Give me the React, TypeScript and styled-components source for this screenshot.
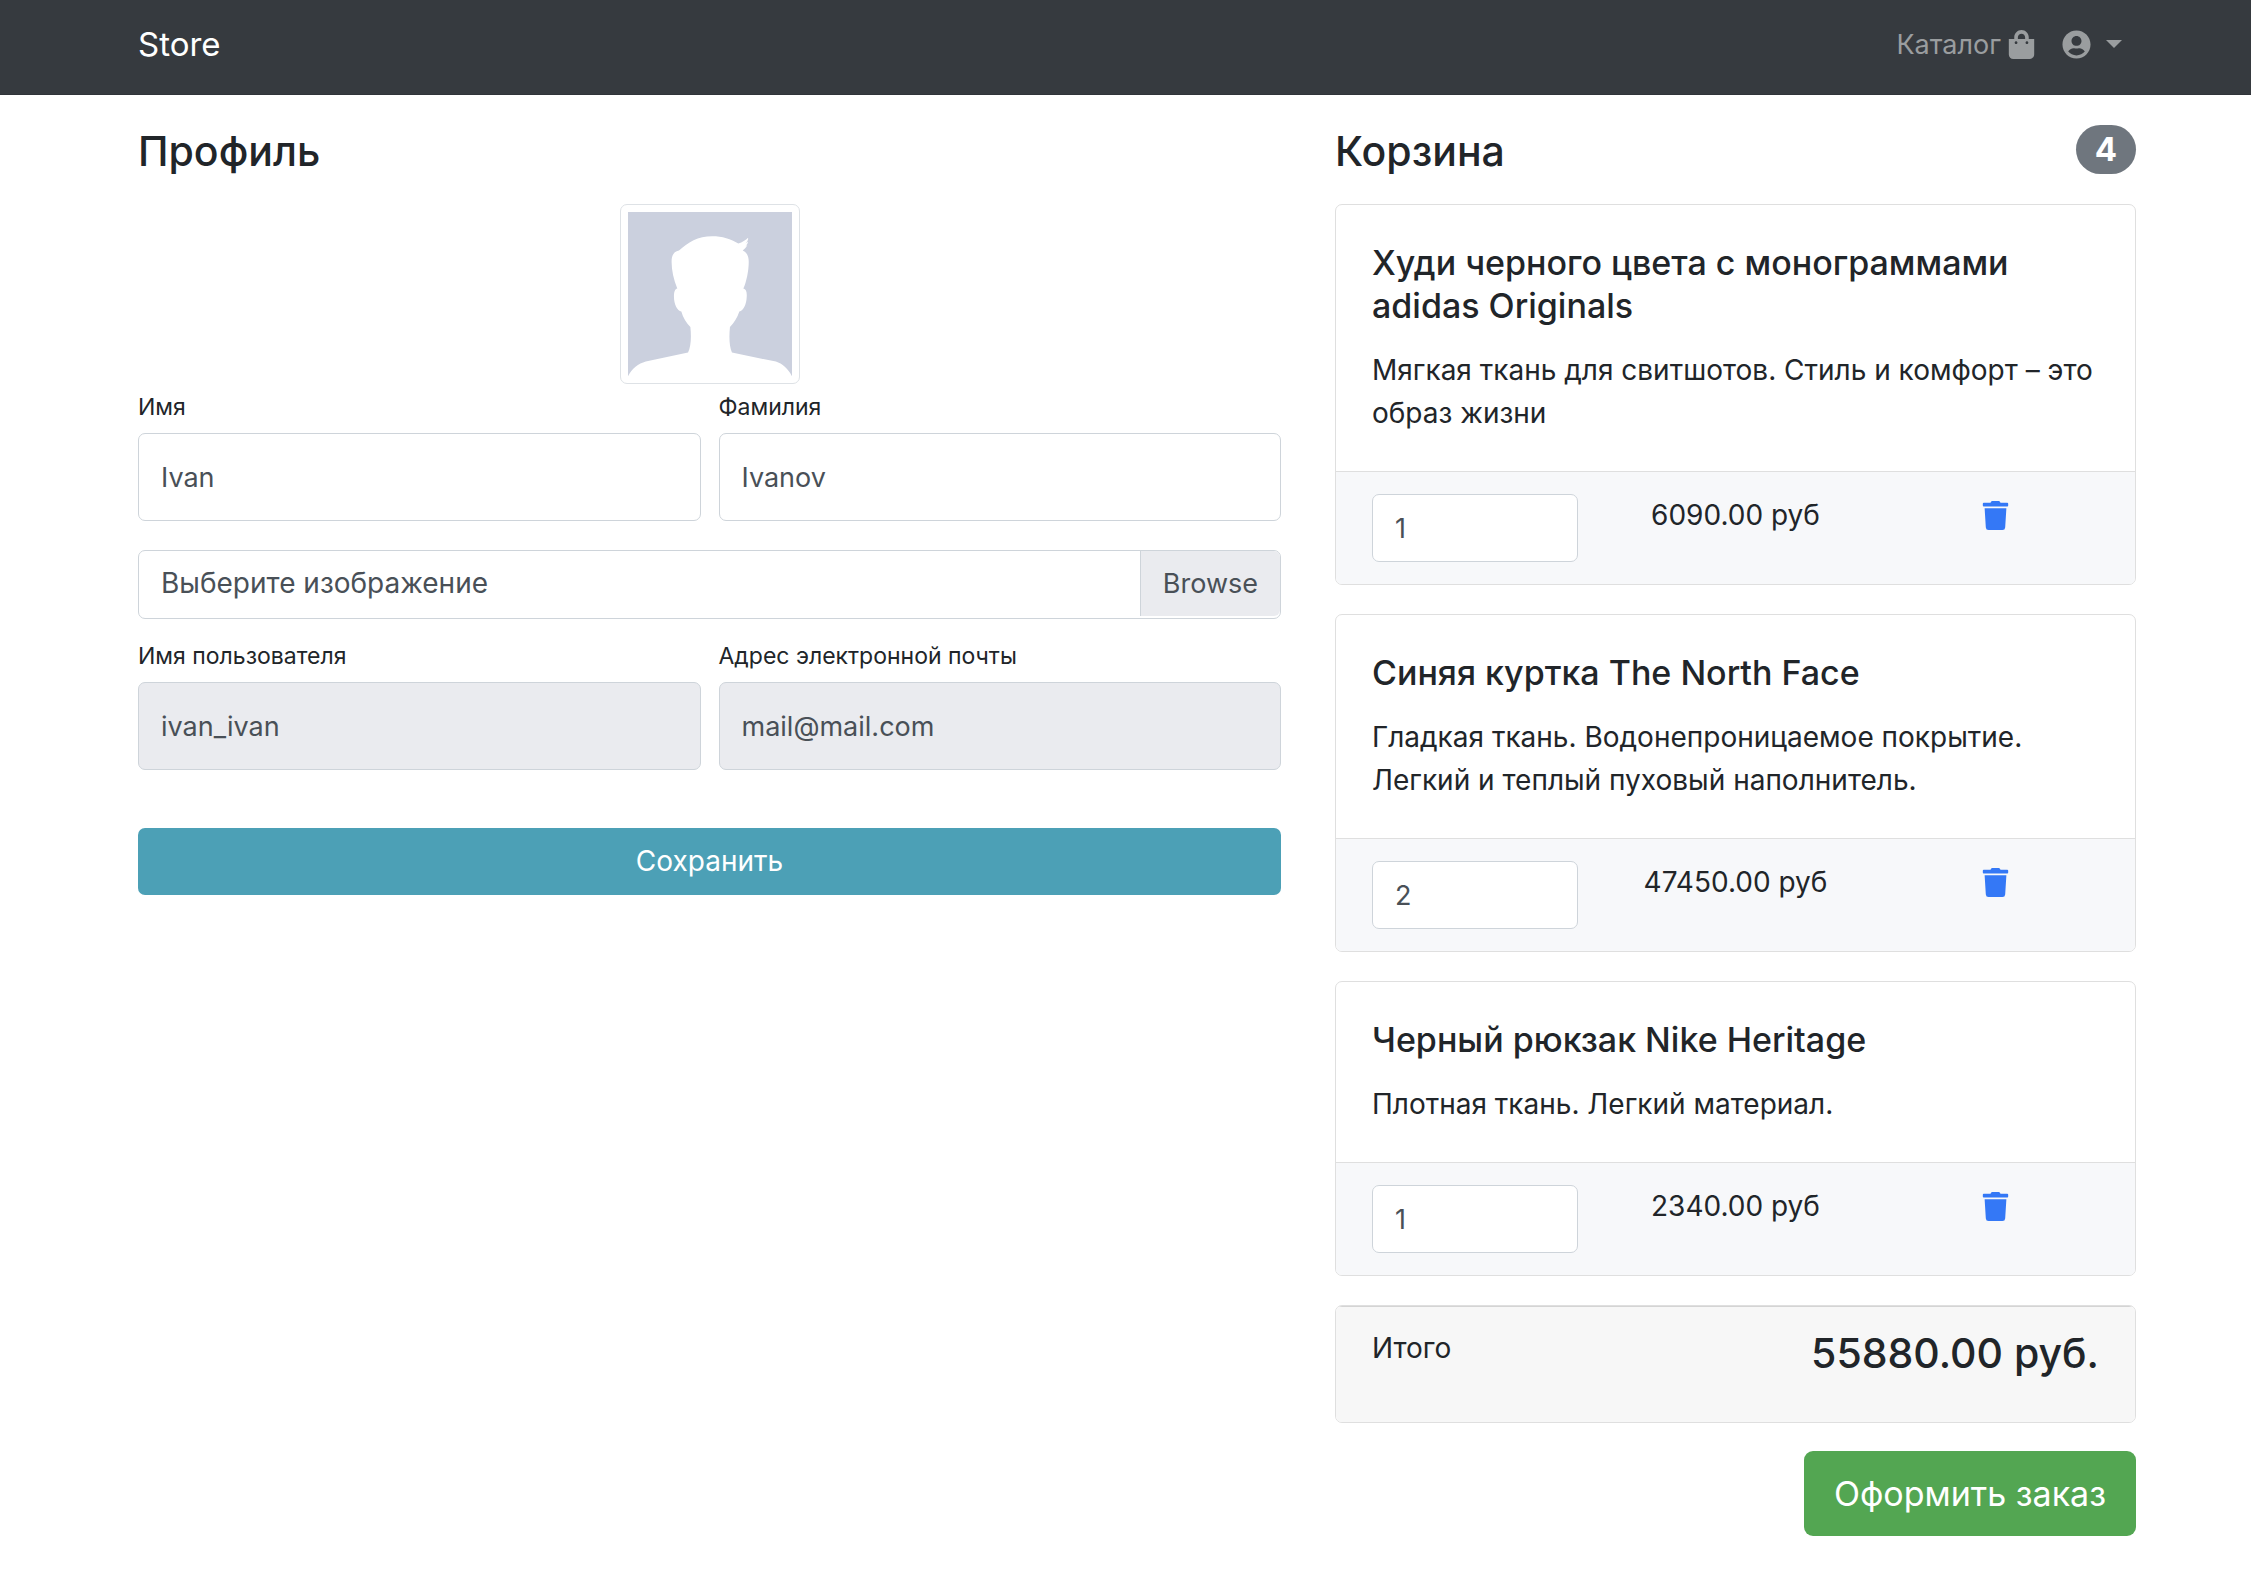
import React from "react";
import styled, { createGlobalStyle } from "styled-components";
import { FaShoppingBag, FaTrash, FaUserCircle } from "react-icons/fa";

const GlobalStyle = createGlobalStyle`
  *, *::before, *::after { box-sizing: border-box; }
  body {
    margin: 0;
    background: #fff;
    color: #212529;
    font: 400 28px/43px Inter, "Noto Sans", sans-serif;
  }
  input, button { font: inherit; }
  h2, h3, p { margin: 0; }
`;

/* ---------- navbar ---------- */

const Navbar = styled.nav`
  display: flex;
  align-items: center;
  justify-content: space-between;
  padding: 8px 115px 14px 138px;
  background: #363a3f;
  border-bottom: 1px solid #303439;
`;

const Brand = styled.a`
  color: #fff;
  font-size: 33px;
  line-height: 54px;
  text-decoration: none;
`;

const NavLinks = styled.div`
  display: flex;
  align-items: center;
`;

const NavLink = styled.a`
  display: flex;
  align-items: center;
  gap: 6px;
  padding: 14px 12px;
  color: #9a9d9f;
  font-size: 27px;
  text-decoration: none;
`;

const UserToggle = styled.button`
  display: flex;
  align-items: center;
  gap: 15px;
  height: 72px;
  padding: 0 14px;
  border: 0;
  background: none;
  color: #9a9d9f;
  cursor: pointer;

  &::after {
    content: "";
    border-top: 8px solid;
    border-right: 8px solid transparent;
    border-left: 8px solid transparent;
  }
`;

/* ---------- page ---------- */

const Page = styled.main`
  display: grid;
  grid-template-columns: minmax(0, 1143fr) minmax(0, 801fr);
  gap: 54px;
  align-items: start;
  padding: 30px 115px 38px 138px;
`;

const SectionHead = styled.div`
  display: flex;
  align-items: flex-start;
  justify-content: space-between;
  margin-bottom: 27px;
`;

const Heading = styled.h2`
  font-size: 41px;
  font-weight: 500;
  line-height: 52px;
`;

const Badge = styled.span`
  padding: 3px 19px;
  border-radius: 25px;
  background: #6f767e;
  color: #fff;
  font-size: 33px;
  font-weight: 700;
`;

/* ---------- profile form ---------- */

const AvatarFrame = styled.div`
  width: 180px;
  margin: 0 auto 6px;
  padding: 7px;
  border: 1px solid #dee2e6;
  border-radius: 7px;

  svg { display: block; width: 100%; }
`;

const FieldRow = styled.div`
  display: grid;
  grid-template-columns: 1fr 1fr;
  gap: 18px;
`;

const Field = styled.div`
  display: flex;
  flex-direction: column;
  gap: 8px;
`;

const FieldLabel = styled.label`
  font-size: 23px;
  line-height: 35px;
`;

const TextInput = styled.input<{ $compact?: boolean }>`
  width: 100%;
  min-width: 0;
  height: ${(p) => (p.$compact ? 68 : 88)}px;
  padding: 0 22px;
  border: 1px solid #ced4da;
  border-radius: 7px;
  background: #fff;
  color: #495057;
  font-size: 27px;
  outline: none;
  appearance: textfield;

  &:read-only { background: #eaebef; }
  &::-webkit-inner-spin-button { display: none; }
`;

const FilePicker = styled.div`
  position: relative;
  margin: 29px 0 20px;
`;

const FileInput = styled.input`
  position: absolute;
  inset: 0;
  width: 100%;
  opacity: 0;
  cursor: pointer;
`;

const FileLabel = styled.label`
  display: flex;
  align-items: flex-start;
  justify-content: space-between;
  height: 69px;
  padding-left: 22px;
  border: 1px solid #ced4da;
  border-radius: 7px;
  color: #495057;
  line-height: 65px;
`;

const BrowseCap = styled.span`
  padding: 0 22px;
  border-left: 1px solid #ced4da;
  border-radius: 0 6px 6px 0;
  background: #eaebef;
  font-size: 27px;
`;

const SaveButton = styled.button`
  display: block;
  width: 100%;
  height: 67px;
  margin-top: 58px;
  border: 0;
  border-radius: 7px;
  background: #4ca0b6;
  color: #fff;
  cursor: pointer;
`;

/* ---------- basket ---------- */

const BasketColumn = styled.section`
  display: flex;
  flex-direction: column;
`;

const CardList = styled.div`
  display: flex;
  flex-direction: column;
  gap: 29px;
`;

const Card = styled.article`
  overflow: hidden;
  border: 1px solid #dfdfdf;
  border-radius: 7px;
`;

const CardBody = styled.div`
  padding: 36px;
`;

const CardTitle = styled.h3`
  margin-bottom: 22px;
  font-size: 34px;
  font-weight: 500;
  line-height: 43px;
`;

const CardFooter = styled.div`
  display: grid;
  grid-template-columns: repeat(3, minmax(0, 1fr));
  gap: 54px;
  align-items: start;
  padding: 22px 36px;
  border-top: 1px solid #dfdfdf;
  background: #f7f8fa;
`;

const Price = styled.p`
  text-align: center;
  white-space: nowrap;
`;

const RemoveButton = styled.button`
  display: flex;
  align-items: center;
  justify-content: center;
  height: 43px;
  padding: 0;
  border: 0;
  background: none;
  color: #3478f6;
  cursor: pointer;
`;

const TotalBar = styled.div`
  display: flex;
  align-items: flex-start;
  justify-content: space-between;
  padding: 20px 36px 43px;
  border-top: 1px solid #d4d4d4;
  background: #f7f7f7;
`;

const TotalSum = styled.strong`
  font-size: 41px;
  font-weight: 500;
  line-height: 52px;
`;

const OrderButton = styled.button`
  align-self: flex-end;
  height: 85px;
  margin-top: 28px;
  padding: 0 30px;
  border: 0;
  border-radius: 9px;
  background: #53a652;
  color: #fff;
  font-size: 34px;
  cursor: pointer;
`;

type Item = { id: string; title: string; text: string; quantity: number; price: string };

const items: Item[] = [
  {
    id: "hoodie",
    title: "Худи черного цвета с монограммами adidas Originals",
    text: "Мягкая ткань для свитшотов. Стиль и комфорт – это образ жизни",
    quantity: 1,
    price: "6090.00 руб",
  },
  {
    id: "jacket",
    title: "Синяя куртка The North Face",
    text: "Гладкая ткань. Водонепроницаемое покрытие. Легкий и теплый пуховый наполнитель.",
    quantity: 2,
    price: "47450.00 руб",
  },
  {
    id: "backpack",
    title: "Черный рюкзак Nike Heritage",
    text: "Плотная ткань. Легкий материал.",
    quantity: 1,
    price: "2340.00 руб",
  },
];

const Avatar = () => (
  <AvatarFrame>
    <svg viewBox="84 67 489 489" role="img" aria-label="Ivan Ivanov">
      <rect x="84" y="67" width="489" height="489" fill="#cbd0de" />
      <path
        fill="#fff"
        d="M84 557C94 536 115 519 137 513L263 486C272 468 273 440 270 410C258 398 248 382 243 364C231 361 221 343 221 319C221 305 224 296 231 295C220 268 214 240 214 215C214 195 221 185 236 182C262 157 293 139 335 139C365 139 391 147 413 161C425 158 435 151 442 144C443 150 440 155 434 161L442 155C441 162 437 167 431 172L440 165C437 173 432 178 426 182C439 187 444 200 444 215C444 243 437 275 428 295C436 297 439 305 438 320C437 344 428 361 416 364C410 382 400 398 388 410C385 440 386 468 394 486L525 513C544 519 562 535 573 557Z"
      />
    </svg>
  </AvatarFrame>
);

type FormFieldProps = { id: string; label: string; value: string; type?: string; readOnly?: boolean };

const FormField = ({ id, label, value, type = "text", readOnly }: FormFieldProps) => (
  <Field>
    <FieldLabel htmlFor={id}>{label}</FieldLabel>
    <TextInput id={id} type={type} defaultValue={value} readOnly={readOnly} />
  </Field>
);

const BasketCard = ({ item }: { item: Item }) => (
  <Card>
    <CardBody>
      <CardTitle>{item.title}</CardTitle>
      <p>{item.text}</p>
    </CardBody>
    <CardFooter>
      <TextInput $compact type="number" min={0} defaultValue={item.quantity} aria-label="Количество" />
      <Price>{item.price}</Price>
      <RemoveButton type="button" aria-label="Удалить">
        <FaTrash size={29} />
      </RemoveButton>
    </CardFooter>
  </Card>
);

export default function App() {
  return (
    <>
      <GlobalStyle />
      <Navbar>
        <Brand href="#">Store</Brand>
        <NavLinks>
          <NavLink href="#catalog">
            Каталог
            <FaShoppingBag size={29} />
          </NavLink>
          <UserToggle type="button" aria-label="Профиль">
            <FaUserCircle size={29} />
          </UserToggle>
        </NavLinks>
      </Navbar>
      <Page>
        <section>
          <SectionHead>
            <Heading>Профиль</Heading>
          </SectionHead>
          <form onSubmit={(e) => e.preventDefault()}>
            <Avatar />
            <FieldRow>
              <FormField id="first-name" label="Имя" value="Ivan" />
              <FormField id="last-name" label="Фамилия" value="Ivanov" />
            </FieldRow>
            <FilePicker>
              <FileLabel htmlFor="image">
                Выберите изображение
                <BrowseCap>Browse</BrowseCap>
              </FileLabel>
              <FileInput id="image" type="file" />
            </FilePicker>
            <FieldRow>
              <FormField id="username" label="Имя пользователя" value="ivan_ivan" readOnly />
              <FormField id="email" label="Адрес электронной почты" value="mail@mail.com" type="email" readOnly />
            </FieldRow>
            <SaveButton type="submit">Сохранить</SaveButton>
          </form>
        </section>
        <BasketColumn>
          <SectionHead>
            <Heading>Корзина</Heading>
            <Badge>4</Badge>
          </SectionHead>
          <CardList>
            {items.map((item) => (
              <BasketCard key={item.id} item={item} />
            ))}
            <Card>
              <TotalBar>
                <span>Итого</span>
                <TotalSum>55880.00 руб.</TotalSum>
              </TotalBar>
            </Card>
          </CardList>
          <OrderButton type="button">Оформить заказ</OrderButton>
        </BasketColumn>
      </Page>
    </>
  );
}
